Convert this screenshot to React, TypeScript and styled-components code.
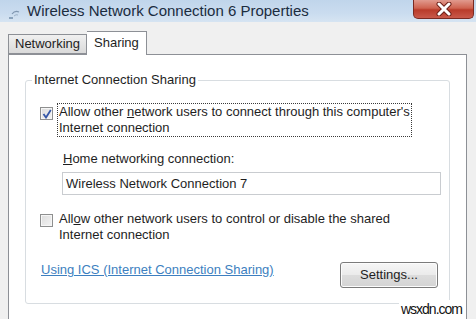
import React from 'react';
import styled, { createGlobalStyle } from 'styled-components';

const Global = createGlobalStyle`
  html, body { margin: 0; padding: 0; background: #f0f0f0; overflow: hidden; }
  body { font-family: "Liberation Sans", Arial, sans-serif; }
`;

const Window = styled.div`
  position: relative;
  width: 476px;
  height: 319px;
  overflow: hidden;
  background: #f0f0f0;
  display: flex;
  flex-direction: column;
  font-family: "Liberation Sans", Arial, sans-serif;
  color: #1e1e1e;
`;

const TitleBar = styled.div`
  height: 22px;
  flex: none;
  display: flex;
  align-items: flex-start;
  background: linear-gradient(to bottom, #c0d5eb 0%, #cadcef 60%, #d6e4f2 100%);
`;

const TitleIcon = styled.svg`
  width: 14px;
  height: 12px;
  margin: 8px 5px 0 8px;
  flex: none;
`;

const TitleText = styled.div`
  font-size: 15px;
  line-height: 18px;
  margin-top: 2px;
  color: #1b2c3e;
  white-space: nowrap;
`;

const CloseButton = styled.div`
  margin-left: auto;
  margin-right: 2px;
  width: 61px;
  height: 19px;
  box-sizing: border-box;
  border: 1px solid #7a2a22;
  border-top: none;
  border-radius: 0 0 5px 5px;
  background: linear-gradient(to bottom, #e19a8e 0%, #cf6350 45%, #b93b2a 55%, #c9594a 100%);
  display: flex;
  align-items: center;
  justify-content: center;
`;

const Body = styled.div`
  flex: 1;
  display: flex;
  flex-direction: column;
  padding: 9px 9px 0 8px;
  min-height: 0;
`;

const TabStrip = styled.div`
  display: flex;
  align-items: flex-end;
  height: 23px;
  flex: none;
`;

const Tab = styled.div<{ $active?: boolean; $w: number }>`
  box-sizing: border-box;
  width: ${p => p.$w}px;
  height: ${p => (p.$active ? 24 : 20)}px;
  margin-bottom: ${p => (p.$active ? -1 : 0)}px;
  border: 1px solid #8d9096;
  border-bottom: ${p => (p.$active ? 'none' : '1px solid #8d9096')};
  border-left: ${p => (p.$active ? 'none' : '1px solid #8d9096')};
  background: ${p => (p.$active ? '#ffffff' : 'linear-gradient(to bottom, #f0f0f0, #dadada)')};
  font-size: 13px;
  line-height: ${p => (p.$active ? 21 : 18)}px;
  padding-left: ${p => (p.$active ? 7 : 6)}px;
  color: #1e1e1e;
  position: relative;
  z-index: ${p => (p.$active ? 1 : 0)};
`;

const Panel = styled.div`
  flex: 1;
  background: #ffffff;
  border: 1px solid #8d9096;
  border-bottom: none;
  padding: 17px 16px 0 16px;
`;

const GroupBox = styled.fieldset`
  margin: 0;
  border: 1px solid #d8dde1;
  border-radius: 3px;
  padding: 0 8px 15px 14px;
  min-inline-size: 0;
  display: flex;
  flex-direction: column;
`;

const Legend = styled.legend`
  font-size: 13px;
  line-height: 16px;
  padding: 0 2px;
  margin-left: -8px;
  color: #1e1e1e;
`;

const CheckRow = styled.div<{ $top: number }>`
  display: flex;
  align-items: flex-start;
  margin-top: ${p => p.$top}px;
`;

const Box = styled.div`
  width: 13px;
  height: 13px;
  box-sizing: border-box;
  border: 1px solid #8e8f8f;
  background: linear-gradient(135deg, #dcdcdc 0%, #f4f4f4 100%);
  box-shadow: inset 0 0 0 1px #f6f6f6;
  flex: none;
  margin-top: 4px;
  display: flex;
  align-items: center;
  justify-content: center;
`;

const CheckLabel = styled.div<{ $focus?: boolean }>`
  font-size: 13px;
  line-height: 16px;
  margin-left: 4px;
  padding: 0 1px;
  border: 1px dotted ${p => (p.$focus ? '#3a3a3a' : 'transparent')};
  color: #1e1e1e;
  white-space: nowrap;
`;

const U = styled.span`
  text-decoration: underline;
`;

const FieldLabel = styled.div`
  font-size: 13px;
  line-height: 16px;
  margin: 14px 0 0 23px;
`;

const TextBox = styled.div`
  margin: 5px 0 0 22px;
  height: 23px;
  box-sizing: border-box;
  border: 1px solid #c9ccd0;
  font-size: 13px;
  line-height: 21px;
  padding-left: 3px;
  background: #fff;
`;

const BottomRow = styled.div`
  display: flex;
  align-items: flex-start;
  justify-content: space-between;
  margin-top: 18px;
  padding-right: 3px;
`;

const Link = styled.a`
  font-size: 13px;
  line-height: 16px;
  color: #3d7fc0;
  text-decoration: underline;
  margin-left: 1px;
  cursor: pointer;
`;

const Button = styled.div`
  width: 98px;
  height: 26px;
  box-sizing: border-box;
  border: 1px solid #7b7b7b;
  border-radius: 3px;
  background: linear-gradient(to bottom, #f6f6f6 0%, #ebebeb 48%, #dcdcdc 52%, #d4d4d4 100%);
  box-shadow: inset 0 0 0 1px #fcfcfc;
  font-size: 13px;
  line-height: 24px;
  text-align: center;
  color: #1e1e1e;
`;

const Watermark = styled.div`
  position: absolute;
  right: 11px;
  bottom: 1px;
  background: #ffffff;
  font-size: 14px;
  letter-spacing: -1px;
  line-height: 18px;
  padding: 0 3px 0 2px;
  color: #111;
`;

export default function App() {
  return (
    <>
      <Global />
      <Window>
        <TitleBar>
          <TitleIcon viewBox="0 0 14 12">
            <path d="M1 9 L5 9 L5 11 L1 11 Z" fill="#8aa2bb" />
            <path d="M4 6 Q7 2 11 4" stroke="#7f96b0" strokeWidth="1.2" fill="none" />
            <path d="M6 8 Q8 6 10 7" stroke="#9fb3c8" strokeWidth="1" fill="none" />
          </TitleIcon>
          <TitleText>Wireless Network Connection 6 Properties</TitleText>
          <CloseButton>
            <svg width="22" height="14" viewBox="0 0 22 14">
              <path d="M6 2 L16 12 M16 2 L6 12" stroke="#6e2018" strokeWidth="5" strokeLinecap="round" />
              <path d="M6 2 L16 12 M16 2 L6 12" stroke="#ffffff" strokeWidth="3" strokeLinecap="round" />
            </svg>
          </CloseButton>
        </TitleBar>
        <Body>
          <TabStrip>
            <Tab $w={79}>Networking</Tab>
            <Tab $w={60} $active>Sharing</Tab>
          </TabStrip>
          <Panel>
            <GroupBox>
              <Legend>Internet Connection Sharing</Legend>
              <CheckRow $top={15}>
                <Box>
                  <svg width="10" height="10" viewBox="0 0 10 10">
                    <path d="M1.5 5 L4 8.5 L8.8 1" stroke="#3557a8" strokeWidth="1.8" fill="none" />
                  </svg>
                </Box>
                <CheckLabel $focus>
                  Allow other <U>n</U>etwork users to connect through this computer's
                  <br />
                  Internet connection
                </CheckLabel>
              </CheckRow>
              <FieldLabel>
                <U>H</U>ome networking connection:
              </FieldLabel>
              <TextBox>Wireless Network Connection 7</TextBox>
              <CheckRow $top={15}>
                <Box />
                <CheckLabel>
                  All<U>o</U>w other network users to control or disable the shared
                  <br />
                  Internet connection
                </CheckLabel>
              </CheckRow>
              <BottomRow>
                <Link>Using ICS (Internet Connection Sharing)</Link>
                <Button>Settings...</Button>
              </BottomRow>
            </GroupBox>
          </Panel>
        </Body>
        <Watermark>wsxdn.com</Watermark>
      </Window>
    </>
  );
}
